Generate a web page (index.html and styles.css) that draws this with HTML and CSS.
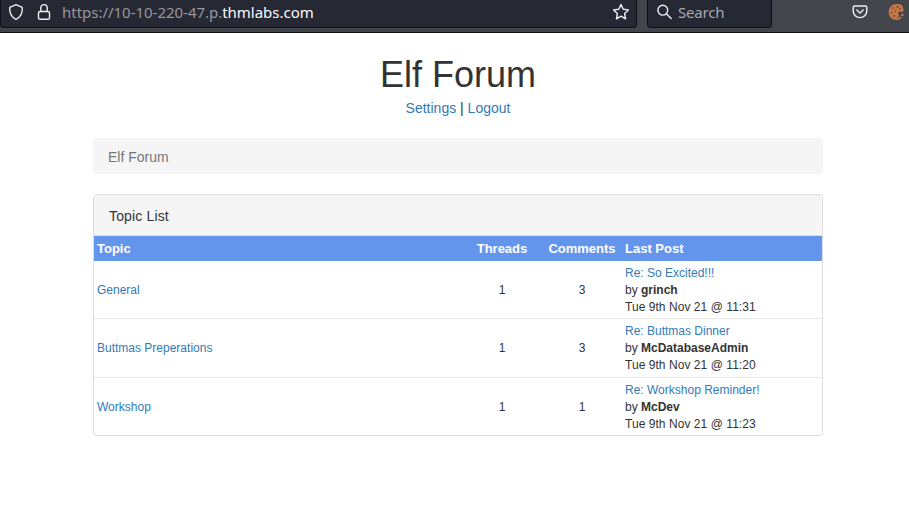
FILE: index.html
```html
<!DOCTYPE html>
<html lang="en">
<head>
<meta charset="utf-8">
<title>Elf Forum</title>
<link rel="stylesheet" href="styles.css">
</head>
<body>
<header class="toolbar">
  <div class="url-bar">
    <svg class="shield" width="16" height="18" viewBox="0 0 16 18"><path d="M8 1.6 L14.2 4.4 C14.8 9.5 12.8 14 8 16.3 C3.2 14 1.2 9.5 1.8 4.4 Z"/></svg>
    <svg class="lock" width="14" height="18" viewBox="0 0 14 18"><rect x="1.5" y="8.5" width="11" height="7.8" rx="1.6"/><path d="M3.8 8.5 V4.8 A3.2 3.2 0 0 1 10.2 4.8 V8.5"/></svg>
    <div class="url">https://10-10-220-47.p.<span>thmlabs.com</span></div>
    <svg class="star" width="18" height="18" viewBox="0 0 18 18"><path d="M9 1.5 L11.2 6.3 L16.4 6.9 L12.6 10.5 L13.6 15.8 L9 13.2 L4.4 15.8 L5.4 10.5 L1.6 6.9 L6.8 6.3 Z"/></svg>
  </div>
  <div class="search-bar">
    <svg width="16" height="16" viewBox="0 0 16 16"><circle cx="5.8" cy="6.2" r="4.9"/><path d="M9.4 9.8 L14.2 14.6"/></svg>
    <span>Search</span>
  </div>
  <svg class="pocket" width="16" height="16" viewBox="0 0 16 16"><path d="M2.6 2 H13.4 Q14.8 2 14.8 3.4 V7 A6.8 6.6 0 0 1 1.2 7 V3.4 Q1.2 2 2.6 2 Z"/><path d="M4.8 6 L8 9 L11.2 6"/></svg>
  <svg class="cookie" width="17" height="18" viewBox="0 0 17 18"><path class="dough" d="M9 1 Q12 .5 15 3 L14.5 5 L16 6.5 L14.5 9 L11 8.5 L10 10.5 L11 12 L10.5 14 L14 14.5 Q12.5 16.5 9 17 C4 17 .5 13.5 .6 9 C.7 4.5 4 1 9 1 Z"/><path class="dough" d="M13.5 10.5 L16 11.5 L15 13.3 L13 13 Z"/><g class="chips"><circle cx="5" cy="5" r=".8"/><circle cx="9.5" cy="3.8" r=".9"/><circle cx="3.5" cy="9.5" r=".8"/><circle cx="7.5" cy="8" r=".8"/><circle cx="6" cy="13" r=".9"/><circle cx="12" cy="6" r=".8"/><circle cx="9.5" cy="14.6" r=".7"/></g></svg>
</header>
<main class="container">
  <h1>Elf Forum</h1>
  <nav class="user-links"><a>Settings</a> | <a>Logout</a></nav>
  <div class="breadcrumb">Elf Forum</div>
  <section class="panel">
    <div class="panel-heading">Topic List</div>
    <table>
      <colgroup><col><col class="count"><col class="count"><col class="last"></colgroup>
      <thead><tr><th>Topic</th><th class="center">Threads</th><th class="center">Comments</th><th>Last Post</th></tr></thead>
      <tbody>
        <tr><td><a>General</a></td><td class="center">1</td><td class="center">3</td><td><a>Re: So Excited!!!</a><br>by <b>grinch</b><br><span class="date">Tue 9th Nov 21 @ 11:31</span></td></tr>
        <tr><td><a>Buttmas Preperations</a></td><td class="center">1</td><td class="center">3</td><td><a>Re: Buttmas Dinner</a><br>by <b>McDatabaseAdmin</b><br><span class="date">Tue 9th Nov 21 @ 11:20</span></td></tr>
        <tr><td><a>Workshop</a></td><td class="center">1</td><td class="center">1</td><td><a>Re: Workshop Reminder!</a><br>by <b>McDev</b><br><span class="date">Tue 9th Nov 21 @ 11:23</span></td></tr>
      </tbody>
    </table>
  </section>
</main>
</body>
</html>
```
FILE: styles.css
```css
* { box-sizing: border-box; }
body {
  margin: 0;
  background: #fff;
  color: #333;
  font: 14px/20px "Liberation Sans", Arial, sans-serif;
  overflow: hidden;
}
a { color: #337ab7; }

.toolbar {
  display: flex;
  align-items: flex-start;
  height: 33px;
  background: #42454c;
  border-bottom: 1px solid #0c0c11;
  font: 15px/24px "Noto Sans", sans-serif;
}
.toolbar svg {
  flex: none;
  fill: none;
  stroke: #eeeef2;
  stroke-width: 1.4;
  stroke-linejoin: round;
  stroke-linecap: round;
}
.url-bar, .search-bar {
  display: flex;
  height: 28px;
  background: #262834;
  border: 1px solid #0f1016;
  border-top: 0;
  border-radius: 0 0 4px 4px;
}
.url-bar { width: 637px; padding-left: 7px; }
.url-bar .shield { margin-top: 3px; }
.url-bar .lock { margin: 3px 0 0 13px; }
.url { flex: 1; margin-left: 11px; color: #96979d; white-space: nowrap; letter-spacing: -.02px; }
.url span { color: #fbfbfe; }
.url-bar .star { margin: 3px 6px 0 0; }
.search-bar { width: 125px; margin-left: 10px; padding-left: 9px; color: #a9aab0; }
.search-bar svg { margin: 4px 5px 0 0; }
.search-bar span { letter-spacing: -.2px; }
.toolbar .pocket { margin: 4px 0 0 80px; }
.toolbar .cookie { margin: 3px 0 0 20px; stroke: none; }
.cookie .dough { fill: #c47748; }
.cookie .chips { fill: #693622; }

.container { width: 730px; margin: 0 0 0 93px; }
h1 {
  margin: 22px 0 3px;
  font-size: 36px;
  font-weight: 400;
  line-height: 40px;
  text-align: center;
}
.user-links { text-align: center; }
.breadcrumb {
  height: 36px;
  margin: 20px 0;
  padding: 9px 15px 7px;
  border-radius: 4px;
  background: #f5f5f5;
  color: #777;
}
.panel {
  border: 1px solid #ddd;
  border-radius: 4px;
  box-shadow: 0 1px 1px rgba(0, 0, 0, .05);
  overflow: hidden;
}
.panel-heading {
  height: 41px;
  padding: 11px 15px 9px;
  background: #f5f5f5;
  border-bottom: 1px solid #ddd;
  letter-spacing: .15px;
}
table {
  width: 100%;
  table-layout: fixed;
  border-spacing: 0;
  font-size: 12px;
  line-height: 17px;
}
.count { width: 80px; }
.last { width: 200px; }
th {
  height: 25px;
  padding: 3px;
  background: #6495ed;
  color: #fff;
  font-size: 13px;
  line-height: 19px;
  text-align: left;
}
td { padding: 4px 3px 2px; vertical-align: middle; }
tbody tr + tr td { border-top: 1px solid #e6e6e6; }
tbody tr:nth-child(2) td { padding-bottom: 3px; }
.date { letter-spacing: .05px; }
.center { text-align: center; }
```
